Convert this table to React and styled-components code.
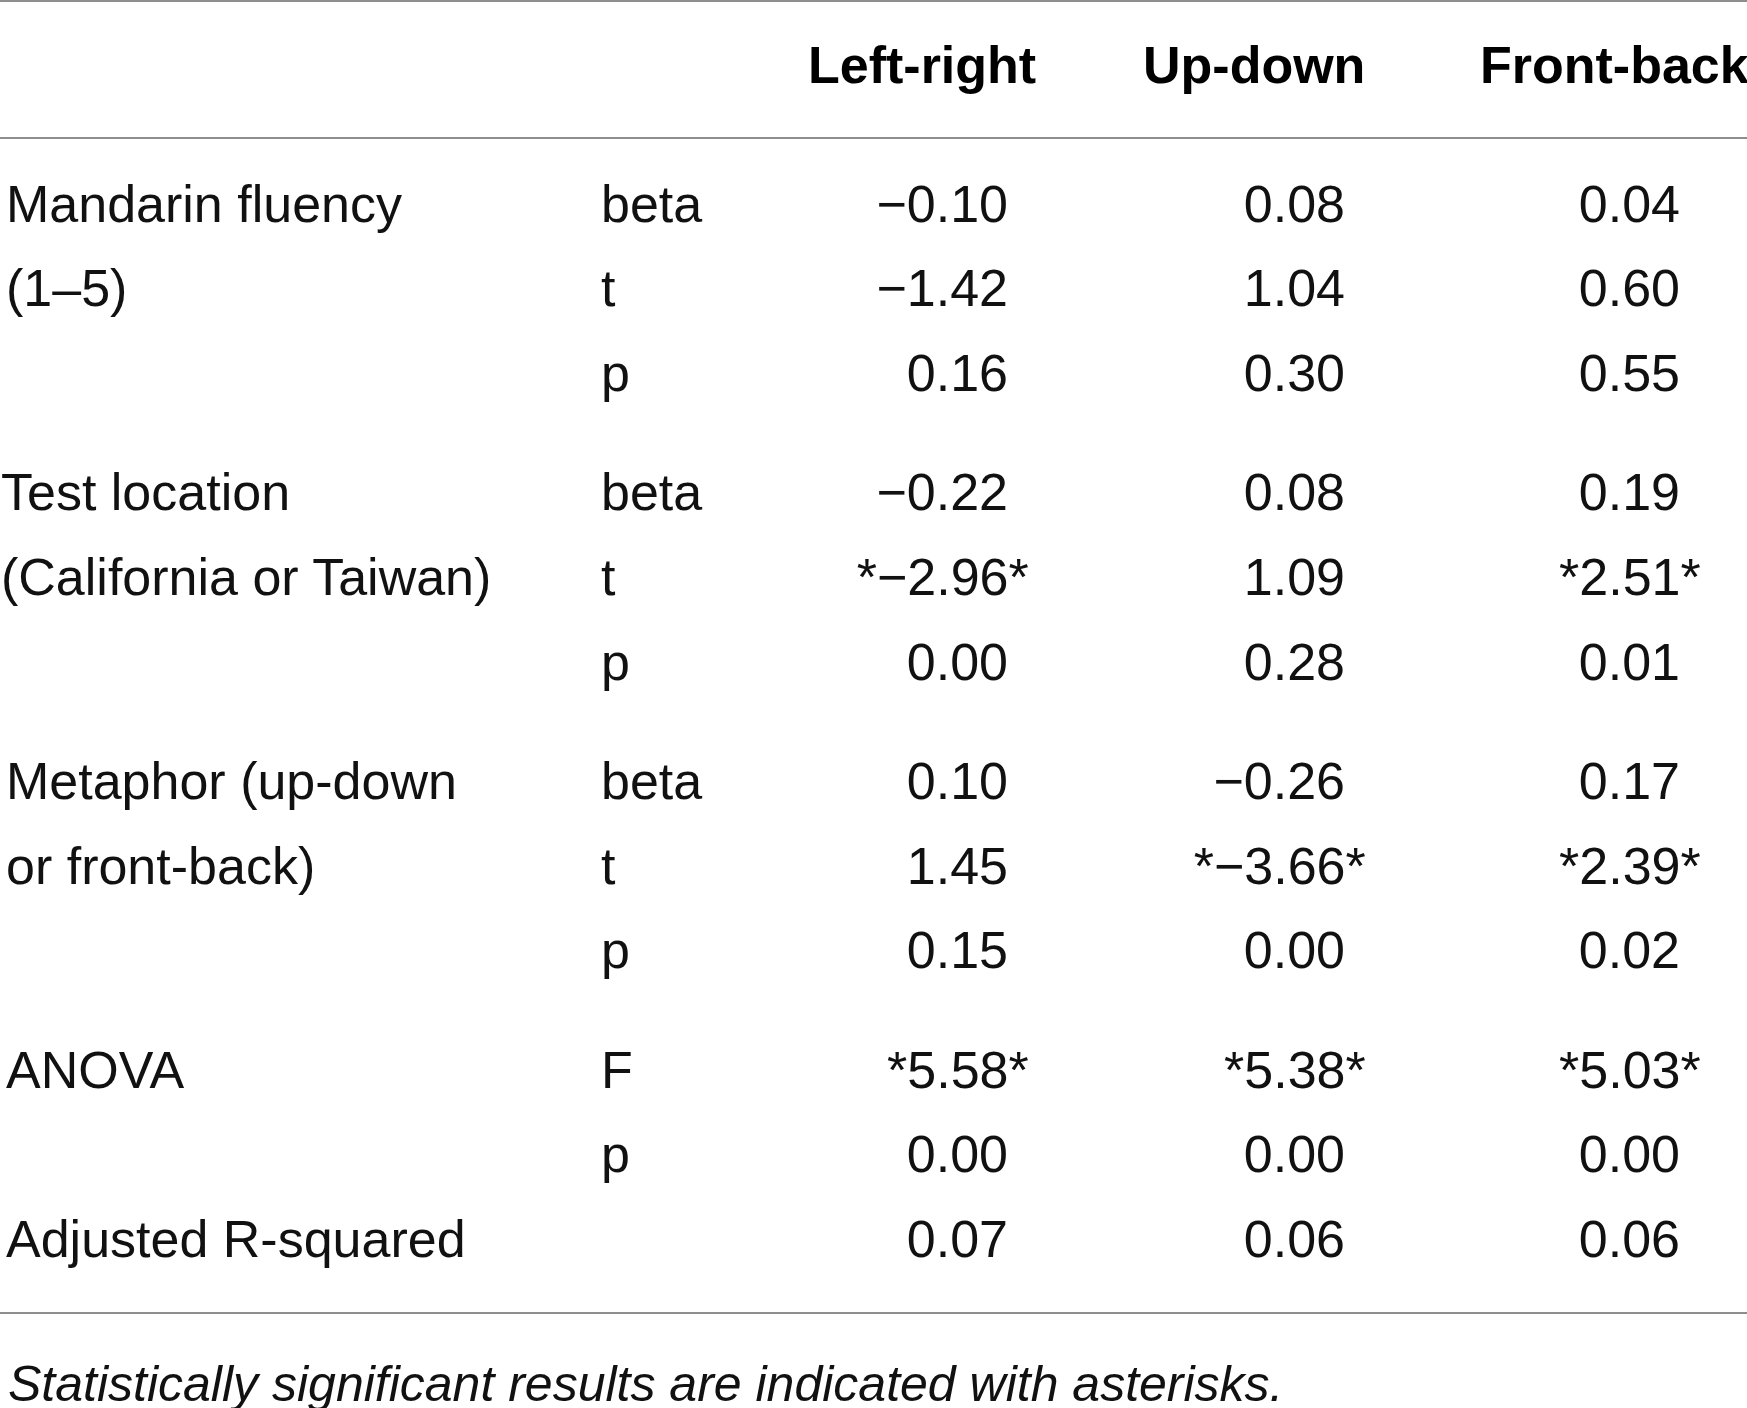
import React from 'react';
import styled, { createGlobalStyle } from 'styled-components';

const GlobalStyle = createGlobalStyle`
  html, body {
    margin: 0;
    padding: 0;
    background: #fff;
  }
  body {
    overflow: hidden;
    font-family: "Liberation Sans", Arial, sans-serif;
    color: #111;
  }
`;

const COLUMNS = '601px 72px 335px 337px 335px';
const ROW = '84.7px';

const Page = styled.div`
  width: 1747px;
  height: 1408px;
  overflow: hidden;
  background: #fff;
`;

const Table = styled.div`
  border-top: 2px solid #8e8e8e;
  border-bottom: 2px solid #8e8e8e;
`;

const HeadRow = styled.div`
  display: grid;
  grid-template-columns: ${COLUMNS};
  padding: 20.5px 0 29.5px;
  border-bottom: 2px solid #8e8e8e;
`;

const HeadCell = styled.div`
  font-size: 52px;
  font-weight: 700;
  line-height: 85px;
  padding-left: 135px;
  white-space: nowrap;
  color: #000;
`;

const Body = styled.div`
  padding: 22.6px 0 30.2px;
`;

const Group = styled.div`
  display: grid;
  grid-template-columns: ${COLUMNS};
  grid-auto-rows: ${ROW};
  margin-top: ${p => (p.$tight ? '0' : '34.6px')};

  &:first-child {
    margin-top: 0;
  }
`;

const Label = styled.div`
  grid-column: 1;
  grid-row: 1 / span ${p => p.$span};
  font-size: 52px;
  line-height: ${ROW};
  padding-left: ${p => (p.$pull ? '1px' : '6px')};
  white-space: nowrap;
`;

const Stat = styled.div`
  grid-column: 2;
  font-size: 52px;
  line-height: ${ROW};
  white-space: nowrap;
`;

const Value = styled.div`
  font-size: 52px;
  line-height: ${ROW};
  text-align: right;
  white-space: nowrap;
`;

const Hang = styled.span`
  margin-right: -0.4em;
`;

const Note = styled.p`
  margin: 41px 0 0;
  padding-left: 8px;
  font-size: 50px;
  font-style: italic;
  line-height: normal;
  white-space: nowrap;
  color: #111;
`;

const headers = ['Left-right', 'Up-down', 'Front-back'];

const groups = [
  {
    label: ['Mandarin fluency', '(1–5)'],
    rows: [
      ['beta', '−0.10', '0.08', '0.04'],
      ['t', '−1.42', '1.04', '0.60'],
      ['p', '0.16', '0.30', '0.55'],
    ],
  },
  {
    label: ['Test location', '(California or Taiwan)'],
    pull: true,
    rows: [
      ['beta', '−0.22', '0.08', '0.19'],
      ['t', '*−2.96', '1.09', '*2.51'],
      ['p', '0.00', '0.28', '0.01'],
    ],
  },
  {
    label: ['Metaphor (up-down', 'or front-back)'],
    rows: [
      ['beta', '0.10', '−0.26', '0.17'],
      ['t', '1.45', '*−3.66', '*2.39'],
      ['p', '0.15', '0.00', '0.02'],
    ],
  },
  {
    label: ['ANOVA'],
    rows: [
      ['F', '*5.58', '*5.38', '*5.03'],
      ['p', '0.00', '0.00', '0.00'],
    ],
  },
  {
    label: ['Adjusted R-squared'],
    tight: true,
    rows: [['', '0.07', '0.06', '0.06']],
  },
];

// values flagged with a leading "*" are significant: wrap them in asterisks,
// the trailing one hangs past the column edge like in the printed table
const renderValue = (v) => {
  if (v.startsWith('*')) {
    return (
      <>
        *{v.slice(1)}
        <Hang>*</Hang>
      </>
    );
  }
  return v;
};

const App = () => {
  return (
    <>
      <GlobalStyle />
      <Page>
        <Table>
          <HeadRow>
            <div />
            <div />
            {headers.map((h) => (
              <HeadCell key={h}>{h}</HeadCell>
            ))}
          </HeadRow>

          <Body>
            {groups.map((g, gi) => (
              <Group key={gi} $tight={g.tight}>
                <Label $span={g.rows.length} $pull={g.pull}>
                  {g.label.map((line, li) => (
                    <React.Fragment key={li}>
                      {li > 0 && <br />}
                      {line}
                    </React.Fragment>
                  ))}
                </Label>
                {g.rows.map((r, ri) => (
                  <React.Fragment key={ri}>
                    <Stat style={{ gridRow: ri + 1 }}>{r[0]}</Stat>
                    {r.slice(1).map((v, vi) => (
                      <Value key={vi} style={{ gridRow: ri + 1, gridColumn: vi + 3 }}>
                        {renderValue(v)}
                      </Value>
                    ))}
                  </React.Fragment>
                ))}
              </Group>
            ))}
          </Body>
        </Table>

        <Note>Statistically significant results are indicated with asterisks.</Note>
      </Page>
    </>
  );
};

export default App;
